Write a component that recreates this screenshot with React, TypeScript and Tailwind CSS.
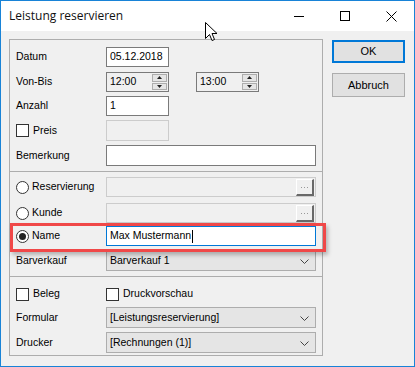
import React from "react";

const lbl = "w-[90px] shrink-0 text-[10.5px] text-black";

function Chevron() {
  return (
    <svg width="9" height="5" viewBox="0 0 9 5" className="absolute right-[6px] top-[8px]">
      <path d="M0.5 0.5 L4.5 4.5 L8.5 0.5" fill="none" stroke="#444" strokeWidth="1" />
    </svg>
  );
}

function Combo({ value }: { value: string }) {
  return (
    <div className="relative flex h-[21px] w-[210px] items-center border border-[#adadad] bg-[#e5e5e5] pl-[3px] text-[10.5px]">
      {value}
      <Chevron />
    </div>
  );
}

function Spin({ value }: { value: string }) {
  return (
    <div className="relative flex h-[20px] w-[63px] items-center border border-[#7a7a7a] bg-[#f0f0f0] pl-[3px] text-[10.5px]">
      {value}
      <div className="absolute right-0 top-0 flex h-full w-[17px] flex-col gap-px p-px">
        <div className="flex flex-1 items-center justify-center border border-[#adadad] bg-[#e5e5e5]">
          <svg width="5" height="3" viewBox="0 0 5 3"><path d="M0 3 L2.5 0 L5 3Z" fill="#222" /></svg>
        </div>
        <div className="flex flex-1 items-center justify-center border border-[#adadad] bg-[#e5e5e5]">
          <svg width="5" height="3" viewBox="0 0 5 3"><path d="M0 0 L2.5 3 L5 0Z" fill="#222" /></svg>
        </div>
      </div>
    </div>
  );
}

function Check({ label }: { label: string }) {
  return (
    <div className="flex items-center gap-[4px] text-[10.5px]">
      <div className="h-[13px] w-[13px] border border-[#333] bg-white" />
      {label}
    </div>
  );
}

function Radio({ label, on }: { label: string; on?: boolean }) {
  return (
    <div className="flex w-[90px] shrink-0 items-center gap-[3px] text-[10.5px]">
      <div className="flex h-[13px] w-[13px] items-center justify-center rounded-full border border-[#333] bg-white">
        {on && <div className="h-[7px] w-[7px] rounded-full bg-[#222]" />}
      </div>
      {label}
    </div>
  );
}

function Lookup() {
  return (
    <div className="relative h-[20px] w-[210px] border border-[#cccccc] bg-[#f0f0f0]">
      <div className="absolute right-[1px] top-[1px] flex h-[17px] w-[18px] items-center justify-center gap-[2px] border-b-2 border-r-2 border-l border-t border-b-[#696969] border-l-white border-r-[#696969] border-t-white bg-[#f0f0f0]">
        <div className="h-px w-px bg-[#999]" />
        <div className="h-px w-px bg-[#999]" />
        <div className="h-px w-px bg-[#999]" />
      </div>
    </div>
  );
}

export default function App() {
  return (
    <div
      className="relative h-[367px] w-[415px] overflow-hidden border border-[#1883d7] bg-[#f0f0f0] text-black"
      style={{ fontFamily: '"Liberation Sans", Arial, sans-serif' }}
    >
      {/* title bar */}
      <div className="flex h-[30px] items-center bg-white">
        <span className="pl-[8px] text-[12px] text-[#111]" style={{ fontFamily: '"Open Sans", sans-serif' }}>
          Leistung reservieren
        </span>
        <div className="ml-auto flex h-full items-center">
          <div className="flex h-full w-[46px] items-center justify-center">
            <div className="h-px w-[10px] bg-black" />
          </div>
          <div className="flex h-full w-[46px] items-center justify-center">
            <div className="h-[10px] w-[10px] border border-black" />
          </div>
          <div className="flex h-full w-[46px] items-center justify-center">
            <svg width="11" height="11" viewBox="0 0 11 11">
              <path d="M0.5 0.5 L10.5 10.5 M10.5 0.5 L0.5 10.5" stroke="#000" strokeWidth="1" />
            </svg>
          </div>
        </div>
      </div>

      {/* body */}
      <div className="flex pl-[8px] pt-[8px]">
        <div className="w-[314px] border border-[#adadad]">
          <div className="flex flex-col pl-[6px] pt-[7px] pb-[5px]">
            <div className="flex h-[20px] items-center">
              <span className={lbl}>Datum</span>
              <div className="flex h-[20px] w-[63px] items-center border border-[#7a7a7a] bg-white pl-[3px] text-[10.5px]">05.12.2018</div>
            </div>
            <div className="mt-[5px] flex h-[20px] items-center">
              <span className={lbl}>Von-Bis</span>
              <Spin value="12:00" />
              <div className="ml-[27px]">
                <Spin value="13:00" />
              </div>
            </div>
            <div className="mt-[4px] flex h-[20px] items-center">
              <span className={lbl}>Anzahl</span>
              <div className="flex h-[20px] w-[63px] items-center border border-[#7a7a7a] bg-white pl-[3px] text-[10.5px]">1</div>
            </div>
            <div className="mt-[4px] flex h-[21px] items-center">
              <div className="w-[90px] shrink-0"><Check label="Preis" /></div>
              <div className="h-[21px] w-[63px] border border-[#cccccc] bg-[#f0f0f0]" />
            </div>
            <div className="mt-[4px] flex h-[21px] items-center">
              <span className={lbl}>Bemerkung</span>
              <div className="h-[21px] w-[210px] border border-[#7a7a7a] bg-white" />
            </div>
          </div>

          <div className="flex flex-col border-t border-[#adadad] pl-[6px] pt-[5px] pb-[5px]">
            <div className="flex h-[20px] items-center">
              <Radio label="Reservierung" />
              <Lookup />
            </div>
            <div className="mt-[6px] flex h-[20px] items-center">
              <Radio label="Kunde" />
              <Lookup />
            </div>
            <div className="mt-[3px] flex h-[20px] items-center">
              <Radio label="Name" on />
              <div className="flex h-[20px] w-[210px] items-center border border-[#0078d7] bg-white pl-[3px] text-[10.5px]">
                Max Mustermann<span className="ml-px h-[13px] w-px bg-black" />
              </div>
            </div>
            <div className="mt-[4px] flex h-[21px] items-center">
              <span className={lbl}>Barverkauf</span>
              <Combo value="Barverkauf 1" />
            </div>
          </div>

          <div className="flex flex-col border-t border-[#adadad] pl-[6px] pt-[7px] pb-[2px]">
            <div className="flex h-[20px] items-center">
              <div className="w-[90px] shrink-0"><Check label="Beleg" /></div>
              <Check label="Druckvorschau" />
            </div>
            <div className="mt-[3px] flex h-[21px] items-center">
              <span className={lbl}>Formular</span>
              <Combo value="[Leistungsreservierung]" />
            </div>
            <div className="mt-[4px] flex h-[21px] items-center">
              <span className={lbl}>Drucker</span>
              <Combo value="[Rechnungen (1)]" />
            </div>
          </div>
        </div>

        <div className="ml-[9px] mt-px flex w-[73px] flex-col">
          <button className="flex h-[23px] items-center justify-center border-2 border-[#0078d7] bg-[#e1e1e1] text-[11px]">OK</button>
          <button className="mt-[10px] flex h-[24px] items-center justify-center border border-[#adadad] bg-[#e1e1e1] text-[11px]">Abbruch</button>
        </div>
      </div>

      {/* red highlight annotation */}
      <div className="absolute left-[9px] top-[222px] h-[29px] w-[316px] border-[3px] border-[#f04848] shadow-[2px_3px_4px_rgba(0,0,0,0.25)]" />

      {/* mouse cursor */}
      <svg className="absolute left-[204px] top-[21px]" width="13" height="20" viewBox="0 0 13 20">
        <path d="M0.5 0.5 L0.5 16.5 L4.5 12.5 L7 18.5 L9.5 17.5 L7 11.5 L12 11.5 Z" fill="#fff" stroke="#000" strokeWidth="1" strokeLinejoin="miter" />
      </svg>
    </div>
  );
}
